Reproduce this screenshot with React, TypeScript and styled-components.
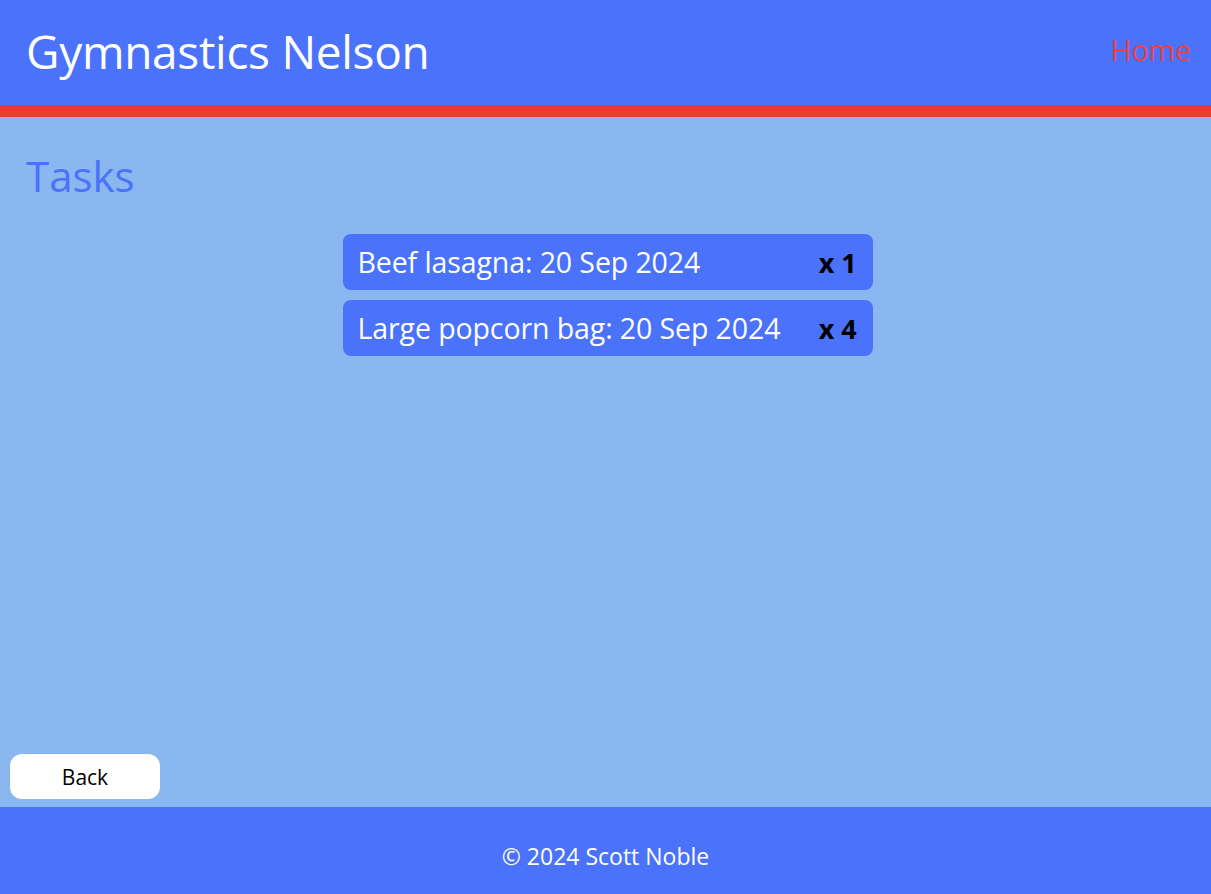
import React from "react";
import styled, { createGlobalStyle } from "styled-components";

const GlobalStyle = createGlobalStyle`
  html, body { margin: 0; padding: 0; }
  body { font-family: "Open Sans", "Noto Sans", sans-serif; background: #8ab7ef; }
  #root { min-height: 100vh; }
`;

const Page = styled.div`
  display: flex;
  flex-direction: column;
  min-height: 100vh;
`;

const Header = styled.header`
  height: 105px;
  background: #4a72fb;
  border-bottom: 12px solid #e83b3b;
  display: flex;
  align-items: center;
  justify-content: space-between;
  padding: 0 20px 0 26px;
`;

const SiteTitle = styled.h1`
  margin: 0;
  font-weight: 400;
  font-size: 46px;
  color: #ffffff;
  letter-spacing: -0.3px;
  padding-bottom: 4px;
`;

const NavLink = styled.a`
  color: #e8414a;
  font-size: 28.5px;
  text-decoration: none;
  padding-bottom: 6px;
`;

const Main = styled.main`
  flex: 1;
  display: flex;
  flex-direction: column;
  padding: 0 6px 8px 10px;
`;

const PageTitle = styled.h2`
  margin: 28px 0 0 16px;
  font-weight: 400;
  font-size: 42px;
  color: #4a72fb;
  line-height: 62px;
`;

const List = styled.ul`
  list-style: none;
  margin: 27px auto 0;
  padding: 0;
  width: 530px;
  display: flex;
  flex-direction: column;
  gap: 10px;
  flex: 1;
`;

const Item = styled.li`
  height: 56px;
  box-sizing: border-box;
  background: #4a72fb;
  border-radius: 8px;
  display: flex;
  align-items: center;
  justify-content: space-between;
  padding: 0 16px 0 15px;
  font-size: 28.5px;
  color: #ffffff;
  letter-spacing: -0.1px;
`;

const Qty = styled.span`
  color: #000000;
  font-weight: 700;
  font-size: 27px;
`;

const BackButton = styled.button`
  width: 150px;
  height: 45px;
  border: none;
  border-radius: 12px;
  background: #ffffff;
  color: #000000;
  font-family: inherit;
  font-size: 21px;
  cursor: pointer;
  align-self: flex-start;
`;

const Footer = styled.footer`
  height: 87px;
  background: #4a72fb;
  display: flex;
  align-items: center;
  justify-content: center;
  color: #ffffff;
  font-size: 23px;
  padding-top: 10px;
  box-sizing: border-box;
`;

const tasks = [
  { name: "Beef lasagna", date: "20 Sep 2024", qty: 1 },
  { name: "Large popcorn bag", date: "20 Sep 2024", qty: 4 },
];

export default function App() {
  return (
    <>
      <GlobalStyle />
      <Page>
        <Header>
          <SiteTitle>Gymnastics Nelson</SiteTitle>
          <NavLink href="#">Home</NavLink>
        </Header>
        <Main>
          <PageTitle>Tasks</PageTitle>
          <List>
            {tasks.map((t) => (
              <Item key={t.name}>
                <span>
                  {t.name}: {t.date}
                </span>
                <Qty>x {t.qty}</Qty>
              </Item>
            ))}
          </List>
          <BackButton>Back</BackButton>
        </Main>
        <Footer>© 2024 Scott Noble</Footer>
      </Page>
    </>
  );
}
